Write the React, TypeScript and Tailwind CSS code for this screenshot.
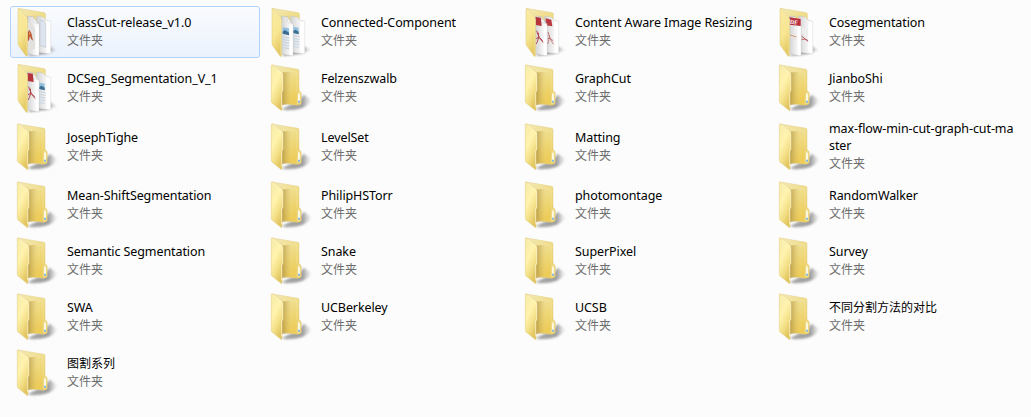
type IconKind = 'empty' | 'classcut' | 'image' | 'pdf' | 'pdfRed' | 'mixed';

interface Folder {
  name: string;
  icon?: IconKind;
  selected?: boolean;
  cjk?: boolean;
}

const folders: Folder[] = [
  { name: 'ClassCut-release_v1.0', icon: 'classcut', selected: true },
  { name: 'Connected-Component', icon: 'image' },
  { name: 'Content Aware Image Resizing', icon: 'pdf' },
  { name: 'Cosegmentation', icon: 'pdfRed' },
  { name: 'DCSeg_Segmentation_V_1', icon: 'mixed' },
  { name: 'Felzenszwalb' },
  { name: 'GraphCut' },
  { name: 'JianboShi' },
  { name: 'JosephTighe' },
  { name: 'LevelSet' },
  { name: 'Matting' },
  { name: 'max-flow-min-cut-graph-cut-master' },
  { name: 'Mean-ShiftSegmentation' },
  { name: 'PhilipHSTorr' },
  { name: 'photomontage' },
  { name: 'RandomWalker' },
  { name: 'Semantic Segmentation' },
  { name: 'Snake' },
  { name: 'SuperPixel' },
  { name: 'Survey' },
  { name: 'SWA' },
  { name: 'UCBerkeley' },
  { name: 'UCSB' },
  { name: '不同分割方法的对比', cjk: true },
  { name: '图割系列', cjk: true },
];

function Defs() {
  return (
    <svg width="0" height="0" className="absolute">
      <defs>
        <linearGradient id="front" x1="0" y1="0" x2="0.5" y2="1">
          <stop offset="0" stopColor="#f6eaa9" />
          <stop offset="0.45" stopColor="#fff3ae" />
          <stop offset="0.75" stopColor="#f3df86" />
          <stop offset="1" stopColor="#e3c662" />
        </linearGradient>
        <linearGradient id="frontFull" x1="0" y1="0" x2="0.3" y2="1">
          <stop offset="0" stopColor="#f8eaa4" />
          <stop offset="0.6" stopColor="#f8e692" />
          <stop offset="1" stopColor="#e6cb67" />
        </linearGradient>
        <linearGradient id="back" x1="0" y1="0" x2="0.5" y2="1">
          <stop offset="0" stopColor="#f3e9b4" />
          <stop offset="0.5" stopColor="#efdc88" />
          <stop offset="1" stopColor="#edcc58" />
        </linearGradient>
        <linearGradient id="inner" x1="0" y1="0" x2="1" y2="0">
          <stop offset="0" stopColor="#ac8e3c" stopOpacity="0.75" />
          <stop offset="1" stopColor="#d8bd62" stopOpacity="0" />
        </linearGradient>
        <linearGradient id="shadow" x1="0" y1="0" x2="1" y2="0">
          <stop offset="0" stopColor="#777" stopOpacity="0.65" />
          <stop offset="0.7" stopColor="#777" stopOpacity="0.7" />
          <stop offset="1" stopColor="#999" stopOpacity="0" />
        </linearGradient>
        <linearGradient id="paper" x1="0" y1="0" x2="1" y2="0">
          <stop offset="0" stopColor="#d3d3d3" />
          <stop offset="0.6" stopColor="#f2f2f2" />
          <stop offset="1" stopColor="#ffffff" />
        </linearGradient>
        <filter id="soft" x="-20%" y="-20%" width="140%" height="140%">
          <feGaussianBlur stdDeviation="2.8" />
        </filter>
      </defs>
    </svg>
  );
}

function BackArt({ kind }: { kind: IconKind }) {
  if (kind === 'classcut')
    return <path d="M90 48l11 2 7 12v68l-18-5z" fill="#dde4ed" stroke="#b3bbc6" strokeWidth="1.5" />;
  if (kind === 'pdf')
    return (
      <g>
        <path d="M83 43l17 4 3 20-20-3z" fill="#b93a40" />
        <path d="M90 84c4 14 9 28 17 37M89 120c3-9 5-18 5-26M89 104c6-3 11 1 17 7" fill="none" stroke="#bf6468" strokeWidth="2.5" />
      </g>
    );
  if (kind === 'pdfRed')
    return (
      <g>
        <path d="M88 69l21 5v20l-21-5z" fill="#eeeeee" />
        <path d="M89 97c7 3 12 12 20 15M89 107c7-3 11-2 18 2" fill="none" stroke="#b8555e" strokeWidth="3" />
      </g>
    );
  return (
    <g>
      <path d="M88 68l16 3v19l-16-3z" fill="#92bfdf" />
      <path d="M88 81l6-4 10 6v8l-16-4z" fill="#3d6f93" />
      <path d="M88 95l18 3M88 103l18 3M88 111l18 3M88 119l18 3M88 127l16 3" stroke="#ccd8e3" strokeWidth="4" />
    </g>
  );
}

function FrontArt({ kind }: { kind: IconKind }) {
  if (kind === 'classcut')
    return (
      <g>
        <path d="M53 56l13 2 9 16v60l-22 8z" fill="#e3e1de" />
        <path d="M53 112V86l5-9 6 11 5 22-6-5-3-10-3 14z" fill="#b9552f" />
        <path d="M59 80l2 9-5 7z" fill="#ea9a5c" />
      </g>
    );
  if (kind === 'image')
    return (
      <g>
        <path d="M56 70l19 3v19l-19-4z" fill="#92bfe0" />
        <path d="M56 83l7-5 12 8v8l-19-5z" fill="#3a6b90" />
        <path d="M55 98l21 4M55 106l21 4M55 114l21 4M55 122l21 4M55 130l20 4" stroke="#cbd7e2" strokeWidth="4.5" />
      </g>
    );
  if (kind === 'pdf' || kind === 'mixed')
    return (
      <g>
        <path d="M53 39l16 2 2 25-18-3z" fill="#b5333a" />
        <path d="M56 80c4 15 11 27 20 36M54 120c7-9 9-22 7-34M54 104c8-6 14-1 20 6" fill="none" stroke="#b5444a" strokeWidth="3" />
      </g>
    );
  return (
    <g>
      <path d="M53 40l33 5v21l-33-4z" fill="#b92f3b" />
      <text x="42" y="58" fontSize="18" fontWeight="700" fill="#fff" fontFamily="Liberation Serif" transform="rotate(6 42 58)">PDF</text>
      <path d="M54 93l20 6" stroke="#d19874" strokeWidth="3" />
      <path d="M54 103l20 5" stroke="#e6d7cc" strokeWidth="2" />
    </g>
  );
}

function FolderIcon({ kind }: { kind: IconKind }) {
  if (kind === 'empty')
    return (
      <svg className="-my-[3px] h-14 w-[50px] shrink-0" viewBox="-1 0 150 168" aria-hidden="true">
        <path d="M52 148l54-28 12-16 24 17c-8 15-28 26-50 28-16 1-30 3-40-1z" fill="url(#shadow)" filter="url(#soft)" />
        <path d="M24 15l77 13q3 1 3 4v61l4 3q2 1 2 5v29q0 3-4 4l-8 2-48-6z" fill="url(#back)" stroke="#e2cf8a" strokeWidth="1.5" />
        <path d="M53 38l30-4v98l-30 4z" fill="url(#inner)" />
        <path d="M56 31l42 6v96" fill="none" stroke="#f7ecb6" strokeWidth="1.5" opacity="0.7" />
        <path d="M98 95l7-2 5 5v31q0 4-5 4l-8 1z" fill="#f3df88" stroke="#dcc267" strokeWidth="1.5" />
        <path d="M104 101v26" stroke="#fff" strokeWidth="4.5" />
        <path d="M104 122v6" stroke="#5da5e8" strokeWidth="4.5" />
        <path d="M21 16q1-3 4-1l28 22q3 3 3 7v48l-3 5v52q0 4-4 1l-26-21q-2-2-2-5z" fill="url(#front)" stroke="#dfc976" strokeWidth="1.5" />
        <path d="M28 18l25 21q2 2 2 5v47l-3 5v46" fill="none" stroke="#fffbe4" strokeWidth="1.8" />
      </svg>
    );
  return (
    <svg className="-my-[3px] h-14 w-[50px] shrink-0" viewBox="0 0 150 168" aria-hidden="true">
      <path d="M54 152l64-26 24 12-35 12-50 6z" fill="url(#shadow)" filter="url(#soft)" />
      <path d="M25 13l78 13q3 1 3 5v98l-54 11z" fill="url(#back)" stroke="#dfcd84" strokeWidth="1.5" />
      <path d="M52 40l31-8v101l-31 12z" fill="url(#inner)" opacity="0.7" />
      <path d="M80 36l21 4 6 8 15 4v95q0 3-4 3l-38-6z" fill="url(#paper)" stroke="#c2c2c2" strokeWidth="1.2" />
      <BackArt kind={kind} />
      <path d="M53 36l17 2 10 16 7 5v93q0 4-3 4l-32-7z" fill="url(#paper)" stroke="#b6b6b6" strokeWidth="1.2" />
      <FrontArt kind={kind} />
      {kind !== 'pdfRed' && <path d="M69 39l2 16 13 4-13-18" fill="#f6f6f6" stroke="#b5b5b5" strokeWidth="1" />}
      <path d="M77 66l9 1v86l-9-2z" fill="#fff" opacity="0.9" />
      <path d="M109 52l12 3v92l-12-2z" fill="#fff" />
      <path d="M24 15q1-2 3-1l22 27q3 3 3 7v107q0 4-4 1l-22-31q-2-3-2-6z" fill="url(#frontFull)" stroke="#dec878" strokeWidth="1.5" />
      <path d="M28 17l21 26q2 2 2 6v100" fill="none" stroke="#fff4bf" strokeWidth="1.5" />
    </svg>
  );
}

function FolderTile({ folder }: { folder: Folder }) {
  const frame = folder.selected
    ? 'border-[#b2d3f9] bg-linear-to-b from-[#fafbfd] to-[#eaf2fd]'
    : 'border-transparent';
  const nameStyle = folder.cjk ? 'text-[12px]' : 'text-[12.5px] tracking-[-0.09px]';
  return (
    <div className={`flex min-h-[52px] items-center rounded-[3px] border ${frame}`}>
      <div className="-ml-px flex shrink-0">
        <FolderIcon kind={folder.icon ?? 'empty'} />
      </div>
      <div className="ml-[7px] min-w-0 flex-1 py-px pr-1">
        <div className={`leading-[17px] break-all text-black ${nameStyle}`}>{folder.name}</div>
        <div className="mt-px text-[12px] leading-[18px] text-[#6d6d6d]">文件夹</div>
      </div>
    </div>
  );
}

export default function App() {
  return (
    <main className="h-[417px] w-[1031px] overflow-hidden bg-[#fcfcfc] pt-[6px] pl-[10px] font-['Noto_Sans','Noto_Sans_CJK_SC',sans-serif]">
      <Defs />
      <div className="grid grid-cols-[repeat(4,250px)] gap-1">
        {folders.map((folder) => (
          <FolderTile key={folder.name} folder={folder} />
        ))}
      </div>
    </main>
  );
}
